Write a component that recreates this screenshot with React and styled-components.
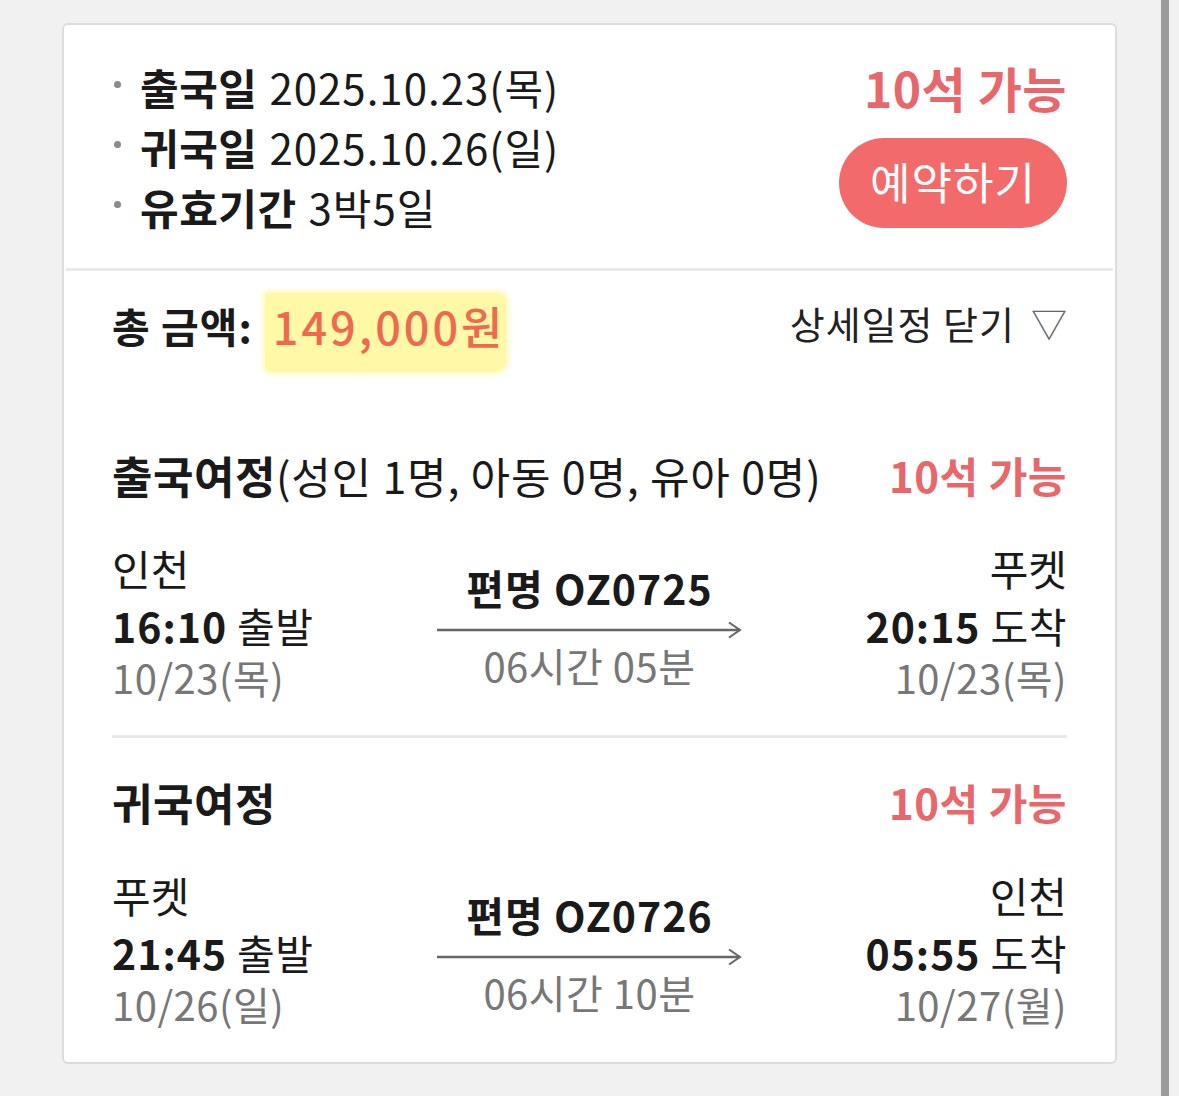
import React from "react";
import styled, { createGlobalStyle } from "styled-components";

const Global = createGlobalStyle`
  html, body { margin: 0; padding: 0; background: #f1f1f1; }
  body { font-family: "Noto Sans CJK KR", "Noto Sans", sans-serif; color: #1a1a1a; }
`;

const Page = styled.div`
  display: grid;
  grid-template-columns: 62px 1055px 44px 8px 1fr;
  min-height: 1096px;
`;

const Card = styled.div`
  grid-column: 2;
  align-self: start;
  margin-top: 23px;
  background: #fff;
  border: 2px solid #dcdcdc;
  border-radius: 6px;
  box-sizing: border-box;
`;

const ScrollBar = styled.div`
  grid-column: 4;
  background: #9b9b9b;
`;

const Summary = styled.div`
  display: flex;
  justify-content: space-between;
  padding: 32px 48px 31px 48px;
`;

const InfoList = styled.ul`
  list-style: none;
  margin: 0;
  padding: 0;
`;

const InfoItem = styled.li`
  display: flex;
  align-items: center;
  height: 60px;
  font-size: 42px;
  line-height: 60px;
  letter-spacing: 1px;
  &::before {
    content: "";
    width: 7px;
    height: 7px;
    border-radius: 50%;
    background: #8a8a8a;
    margin: 0 19px 6px 2px;
    flex: none;
  }
  b { font-weight: 700; margin-right: 12px; letter-spacing: 0.5px; }
`;

const SideCol = styled.div`
  display: flex;
  flex-direction: column;
  align-items: flex-end;
`;

const Seats = styled.div`
  color: #e8676b;
  font-weight: 700;
  font-size: ${(p) => p.$size || 42}px;
  line-height: 60px;
  letter-spacing: 0.5px;
`;

const ReserveButton = styled.button`
  margin-top: 21px;
  width: 228px;
  height: 90px;
  border: none;
  border-radius: 45px;
  background: #f26b6a;
  color: #fff;
  font-family: inherit;
  font-size: 44px;
  font-weight: 400;
  letter-spacing: 1px;
  padding: 0 0 4px;
`;

const Separator = styled.hr`
  margin: 0 2px;
  border: none;
  height: 3px;
  background: #e9e9e9;
`;

const Body = styled.div`
  padding: 24px 48px 35px 48px;
`;

const TotalRow = styled.div`
  display: flex;
  justify-content: space-between;
  align-items: center;
  height: 60px;
`;

const TotalLabel = styled.div`
  font-size: 41px;
  font-weight: 700;
  display: flex;
  align-items: center;
  letter-spacing: 1px;
`;

const Price = styled.span`
  margin-left: 12px;
  color: #ee6a4e;
  font-weight: 500;
  font-size: 45px;
  letter-spacing: 3px;
  padding: 0 0 14px 8px;
  margin-top: 14px;
  background: #fff8a6;
  box-shadow: 0 0 5px 3px #fffbc4;
  border-radius: 3px 8px 12px 6px;
`;

const ToggleDetail = styled.div`
  font-size: 38px;
  color: #222;
  display: flex;
  align-items: center;
  gap: 16px;
  padding-bottom: 6px;
  letter-spacing: 1px;
  span { color: #666; font-size: 36px; letter-spacing: 0; }
`;

const LegHeader = styled.div`
  display: flex;
  justify-content: space-between;
  align-items: center;
  height: 60px;
  margin-top: ${(p) => p.$top}px;
`;

const LegTitle = styled.div`
  font-size: 44px;
  b { font-weight: 700; letter-spacing: 0.5px; }
  span { font-size: 43px; letter-spacing: 0.8px; }
`;

const FlightRow = styled.div`
  display: grid;
  grid-template-columns: 1fr 305px 1fr;
  margin-top: 35px;
`;

const Endpoint = styled.div`
  display: flex;
  flex-direction: column;
  align-items: ${(p) => (p.$right ? "flex-end" : "flex-start")};
`;

const City = styled.div`
  font-size: 42px;
  line-height: 56px;
  height: 56px;
`;

const Time = styled.div`
  font-size: 41px;
  line-height: 58px;
  height: 58px;
  letter-spacing: 0.5px;
  b { font-weight: 700; margin-right: 10px; letter-spacing: 1px; }
`;

const DateText = styled.div`
  font-size: 40px;
  line-height: 46px;
  height: 46px;
  color: #777;
  letter-spacing: 0.5px;
`;

const Middle = styled.div`
  display: flex;
  flex-direction: column;
  align-items: center;
  padding-top: 22px;
`;

const FlightNo = styled.div`
  font-size: 41px;
  font-weight: 700;
  line-height: 50px;
  letter-spacing: 1px;
`;

const Arrow = styled.svg`
  display: block;
  margin-top: 10px;
`;

const Duration = styled.div`
  margin-top: 5px;
  font-size: 40px;
  line-height: 44px;
  color: #777;
  letter-spacing: 0.5px;
`;

const Divider = styled.hr`
  margin: 35px 0 0;
  border: none;
  height: 3px;
  background: #e8e8e8;
`;

function FlightArrow() {
  return (
    <Arrow width="305" height="16" viewBox="0 0 305 16">
      <line x1="0" y1="8" x2="303" y2="8" stroke="#666" strokeWidth="2.5" />
      <polyline points="292,0.5 303,8 292,15.5" fill="none" stroke="#666" strokeWidth="2" />
    </Arrow>
  );
}

function Flight({ from, to, dep, arr, depDate, arrDate, no, dur }) {
  return (
    <FlightRow>
      <Endpoint>
        <City>{from}</City>
        <Time><b>{dep}</b>출발</Time>
        <DateText>{depDate}</DateText>
      </Endpoint>
      <Middle>
        <FlightNo>편명 {no}</FlightNo>
        <FlightArrow />
        <Duration>{dur}</Duration>
      </Middle>
      <Endpoint $right>
        <City>{to}</City>
        <Time><b>{arr}</b>도착</Time>
        <DateText>{arrDate}</DateText>
      </Endpoint>
    </FlightRow>
  );
}

export default function App() {
  return (
    <>
      <Global />
      <Page>
        <Card>
          <Summary>
            <InfoList>
              <InfoItem><b>출국일</b>2025.10.23(목)</InfoItem>
              <InfoItem><b>귀국일</b>2025.10.26(일)</InfoItem>
              <InfoItem><b>유효기간</b>3박5일</InfoItem>
            </InfoList>
            <SideCol>
              <Seats $size={48}>10석 가능</Seats>
              <ReserveButton>예약하기</ReserveButton>
            </SideCol>
          </Summary>
          <Separator />
          <Body>
            <TotalRow>
              <TotalLabel>총 금액:<Price>149,000원</Price></TotalLabel>
              <ToggleDetail>상세일정 닫기<span>▽</span></ToggleDetail>
            </TotalRow>
            <LegHeader $top={90}>
              <LegTitle><b>출국여정</b><span>(성인 1명, 아동 0명, 유아 0명)</span></LegTitle>
              <Seats $size={42}>10석 가능</Seats>
            </LegHeader>
            <Flight
              from="인천" to="푸켓" dep="16:10" arr="20:15"
              depDate="10/23(목)" arrDate="10/23(목)"
              no="OZ0725" dur="06시간 05분"
            />
            <Divider />
            <LegHeader $top={34}>
              <LegTitle><b>귀국여정</b></LegTitle>
              <Seats $size={42}>10석 가능</Seats>
            </LegHeader>
            <Flight
              from="푸켓" to="인천" dep="21:45" arr="05:55"
              depDate="10/26(일)" arrDate="10/27(월)"
              no="OZ0726" dur="06시간 10분"
            />
          </Body>
        </Card>
        <ScrollBar />
      </Page>
    </>
  );
}
